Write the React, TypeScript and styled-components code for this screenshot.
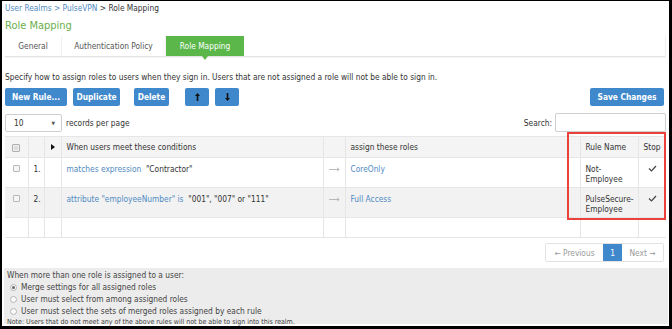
import React from "react";
import styled, { createGlobalStyle } from "styled-components";

const Global = createGlobalStyle`
  html, body { margin: 0; padding: 0; background: #000; }
  body { font-family: "DejaVu Sans Condensed", "DejaVu Sans", Verdana, sans-serif; font-stretch: condensed; }
  * { box-sizing: border-box; }
`;

const Frame = styled.div`
  width: 672px;
  height: 329px;
  background: #000;
  padding: 1px 3px 3px 2px;
`;

const Page = styled.div`
  width: 667px;
  height: 325px;
  background: #fff;
  color: #333;
  font-size: 8.3px;
  padding: 0 0 0 3px;
  display: flex;
  flex-direction: column;
  overflow: hidden;
`;

const Crumbs = styled.div`
  margin-top: 2px;
  height: 11px;
  line-height: 11px;
  font-size: 8.3px;
  color: #333;
`;

const CrumbLink = styled.span`
  color: #4f8ac2;
`;

const Title = styled.div`
  margin-top: 5px;
  font-size: 11px;
  line-height: 14px;
  color: #6aaf4c;
`;

const TabBar = styled.div`
  margin-top: 3px;
  width: 661px;
  height: 21px;
  display: flex;
  border-bottom: 1px solid #e4e4e4;
  border-right: 1px solid #eeeeee;
  box-shadow: 0 1px 1px rgba(0,0,0,0.04);
`;

const Tab = styled.div<{ $active?: boolean; $w: number }>`
  position: relative;
  width: ${p => p.$w}px;
  height: 20px;
  display: flex;
  align-items: center;
  justify-content: center;
  font-size: 8.3px;
  color: ${p => (p.$active ? "#fff" : "#555")};
  background: ${p => (p.$active ? "#5bb74a" : "transparent")};
  border-right: ${p => (p.$active ? "none" : "1px solid #f2f2f2")};
  &::after {
    content: "";
    display: ${p => (p.$active ? "block" : "none")};
    position: absolute;
    left: 50%;
    bottom: -4px;
    margin-left: -3px;
    border-left: 3px solid transparent;
    border-right: 3px solid transparent;
    border-top: 4px solid #5bb74a;
  }
`;

const Desc = styled.div`
  margin-top: 15px;
  font-size: 8.3px;
  line-height: 11px;
  color: #333;
`;

const ButtonRow = styled.div`
  margin-top: 5px;
  width: 659px;
  display: flex;
  align-items: center;
  gap: 6px;
`;

const Btn = styled.div<{ $w: number; $ml?: number }>`
  width: ${p => p.$w}px;
  margin-left: ${p => p.$ml ?? 0}px;
  height: 18px;
  border-radius: 2px;
  background: #3e88cb;
  color: #fff;
  font-weight: bold;
  font-size: 8.3px;
  display: flex;
  align-items: center;
  justify-content: center;
`;

const Spacer = styled.div`
  flex: 1;
`;

const Arrow = styled.svg`
  display: block;
`;

const ControlRow = styled.div`
  margin-top: 7px;
  width: 661px;
  display: flex;
  align-items: center;
`;

const SelectBox = styled.div`
  width: 57px;
  height: 18px;
  border: 1px solid #cfcfcf;
  border-radius: 2px;
  display: flex;
  align-items: center;
  padding: 0 6px 0 8px;
  font-size: 8.3px;
  justify-content: space-between;
`;

const Caret = styled.span`
  font-size: 5px;
  color: #555;
`;

const Label = styled.span`
  margin-left: 4px;
  font-size: 8.3px;
`;

const SearchInput = styled.div`
  margin-left: 3px;
  width: 111px;
  height: 19px;
  border: 1px solid #cfcfcf;
  border-radius: 2px;
`;

const TableWrap = styled.div`
  position: relative;
  margin-top: 4px;
  width: 661px;
`;

const Table = styled.table`
  width: 661px;
  border-collapse: collapse;
  table-layout: fixed;
  font-size: 8.3px;
  border-top: 1px solid #e6e6e6;
  border-bottom: 1px solid #e6e6e6;
`;

const HeadRow = styled.tr`
  height: 21px;
  background: #f4f4f4;
`;

const Row = styled.tr<{ $alt?: boolean; $h: number }>`
  height: ${p => p.$h}px;
  background: ${p => (p.$alt ? "#f2f2f2" : "#fff")};
  border-top: 1px solid #e6e6e6;
`;

const Th = styled.th<{ $center?: boolean }>`
  font-weight: normal;
  text-align: ${p => (p.$center ? "center" : "left")};
  padding: 0 5px;
  color: #333;
  border-left: 1px solid #e6e6e6;
  &:first-child { border-left: none; }
`;

const Td = styled.td<{ $center?: boolean }>`
  vertical-align: top;
  padding: 6px 5px 0;
  line-height: 10px;
  text-align: ${p => (p.$center ? "center" : "left")};
  border-left: 1px solid #e6e6e6;
  &:first-child { border-left: none; }
`;

const Link = styled.span`
  color: #4f8ac2;
`;

const Check = styled.span`
  display: inline-block;
  width: 7px;
  height: 7px;
  border: 1px solid #b8b8b8;
  border-radius: 1px;
  background: #f6f6f6;
  margin-top: 0;
`;

const HeadCheck = styled.span`
  display: inline-block;
  width: 8px;
  height: 8px;
  border: 1px solid #b0b0b0;
  border-radius: 1px;
  background: #ddd;
  box-shadow: inset 0 0 0 1px #eee;
  vertical-align: middle;
`;

const Highlight = styled.div`
  position: absolute;
  left: 562px;
  top: -4px;
  width: 99px;
  height: 88px;
  border: 2px solid #e8423b;
  pointer-events: none;
`;

const PagerRow = styled.div`
  margin-top: 5px;
  width: 659px;
  display: flex;
  justify-content: flex-end;
`;

const Pager = styled.div`
  display: flex;
  height: 19px;
  border: 1px solid #e2e2e2;
  border-radius: 2px;
  font-size: 8.3px;
`;

const PageItem = styled.div<{ $active?: boolean; $w: number }>`
  width: ${p => p.$w}px;
  display: flex;
  align-items: center;
  justify-content: center;
  color: ${p => (p.$active ? "#fff" : "#9a9a9a")};
  background: ${p => (p.$active ? "#3e88cb" : "#fff")};
`;

const Panel = styled.div`
  margin-top: 6px;
  margin-left: -1px;
  width: 664px;
  height: 56px;
  background: #ececec;
  padding: 1px 0 0 3px;
  font-size: 8.3px;
  color: #444;
`;

const PanelLine = styled.div`
  line-height: 12px;
  height: 12px;
`;

const RadioLine = styled.div`
  display: flex;
  align-items: center;
  height: 12px;
  padding-left: 3px;
`;

const Radio = styled.span<{ $on?: boolean }>`
  width: 7px;
  height: 7px;
  border-radius: 50%;
  border: 1px solid #b5b5b5;
  background: #fafafa;
  margin-right: 4px;
  display: flex;
  align-items: center;
  justify-content: center;
  &::after {
    content: "";
    display: ${p => (p.$on ? "block" : "none")};
    width: 3px;
    height: 3px;
    border-radius: 50%;
    background: #666;
  }
`;

const Note = styled.div`
  margin-top: 1px;
  font-size: 7px;
  line-height: 8px;
  color: #444;
`;

const Tick = () => (
  <svg width="9" height="7" viewBox="0 0 9 7">
    <path d="M1 3.5 L3.5 6 L8 1" stroke="#444" strokeWidth="1.2" fill="none" />
  </svg>
);

const RowArrow = () => (
  <svg width="11" height="5" viewBox="0 0 11 5" style={{ marginTop: 2 }}>
    <path d="M0 2.5 L10 2.5 M8 0.8 L10.2 2.5 L8 4.2" stroke="#aaa" strokeWidth="0.8" fill="none" />
  </svg>
);

const UpArrow = () => (
  <Arrow width="5" height="8" viewBox="0 0 5 8">
    <path d="M2.5 0 L5 3 L3.3 3 L3.3 8 L1.7 8 L1.7 3 L0 3 Z" fill="#111" />
  </Arrow>
);

const DownArrow = () => (
  <Arrow width="5" height="8" viewBox="0 0 5 8">
    <path d="M2.5 8 L5 5 L3.3 5 L3.3 0 L1.7 0 L1.7 5 L0 5 Z" fill="#111" />
  </Arrow>
);

export default function App() {
  return (
    <Frame>
      <Global />
      <Page>
        <Crumbs>
          <CrumbLink>User Realms &gt; PulseVPN</CrumbLink> &gt; Role Mapping
        </Crumbs>
        <Title>Role Mapping</Title>
        <TabBar>
          <Tab $w={57}>General</Tab>
          <Tab $w={104}>Authentication Policy</Tab>
          <Tab $w={78} $active>Role Mapping</Tab>
        </TabBar>
        <Desc>
          Specify how to assign roles to users when they sign in. Users that are not assigned a role will not be able to sign in.
        </Desc>
        <ButtonRow>
          <Btn $w={62}>New Rule...</Btn>
          <Btn $w={47}>Duplicate</Btn>
          <Btn $w={35} $ml={8}>Delete</Btn>
          <Btn $w={24} $ml={10}><UpArrow /></Btn>
          <Btn $w={24}><DownArrow /></Btn>
          <Spacer />
          <Btn $w={74}>Save Changes</Btn>
        </ButtonRow>
        <ControlRow>
          <SelectBox>
            10 <Caret>▼</Caret>
          </SelectBox>
          <Label>records per page</Label>
          <Spacer />
          <Label>Search:</Label>
          <SearchInput />
        </ControlRow>
        <TableWrap>
          <Table>
            <colgroup>
              <col style={{ width: 23 }} />
              <col style={{ width: 16 }} />
              <col style={{ width: 17 }} />
              <col style={{ width: 262 }} />
              <col style={{ width: 22 }} />
              <col style={{ width: 235 }} />
              <col style={{ width: 58 }} />
              <col style={{ width: 28 }} />
            </colgroup>
            <thead>
              <HeadRow>
                <Th $center><HeadCheck /></Th>
                <Th />
                <Th $center>
                  <svg width="4" height="6" viewBox="0 0 4 6"><path d="M0 0 L4 3 L0 6 Z" fill="#111" /></svg>
                </Th>
                <Th>When users meet these conditions</Th>
                <Th />
                <Th>assign these roles</Th>
                <Th>Rule Name</Th>
                <Th>Stop</Th>
              </HeadRow>
            </thead>
            <tbody>
              <Row $h={30}>
                <Td $center><Check /></Td>
                <Td>1.</Td>
                <Td />
                <Td><Link>matches expression</Link>&nbsp; "Contractor"</Td>
                <Td $center><RowArrow /></Td>
                <Td><Link>CoreOnly</Link></Td>
                <Td>Not-<br />Employee</Td>
                <Td $center><Tick /></Td>
              </Row>
              <Row $h={30} $alt>
                <Td $center><Check /></Td>
                <Td>2.</Td>
                <Td />
                <Td><Link>attribute "employeeNumber" is</Link>&nbsp; "001", "007" or "111"</Td>
                <Td $center><RowArrow /></Td>
                <Td><Link>Full Access</Link></Td>
                <Td>PulseSecure-<br />Employee</Td>
                <Td $center><Tick /></Td>
              </Row>
              <Row $h={20}>
                <Td /><Td /><Td /><Td /><Td /><Td /><Td /><Td />
              </Row>
            </tbody>
          </Table>
          <Highlight />
        </TableWrap>
        <PagerRow>
          <Pager>
            <PageItem $w={57}>← Previous</PageItem>
            <PageItem $w={19} $active>1</PageItem>
            <PageItem $w={41}>Next →</PageItem>
          </Pager>
        </PagerRow>
        <Panel>
          <PanelLine>When more than one role is assigned to a user:</PanelLine>
          <RadioLine><Radio $on />Merge settings for all assigned roles</RadioLine>
          <RadioLine><Radio />User must select from among assigned roles</RadioLine>
          <RadioLine><Radio />User must select the sets of merged roles assigned by each rule</RadioLine>
          <Note>Note: Users that do not meet any of the above rules will not be able to sign into this realm.</Note>
        </Panel>
      </Page>
    </Frame>
  );
}
